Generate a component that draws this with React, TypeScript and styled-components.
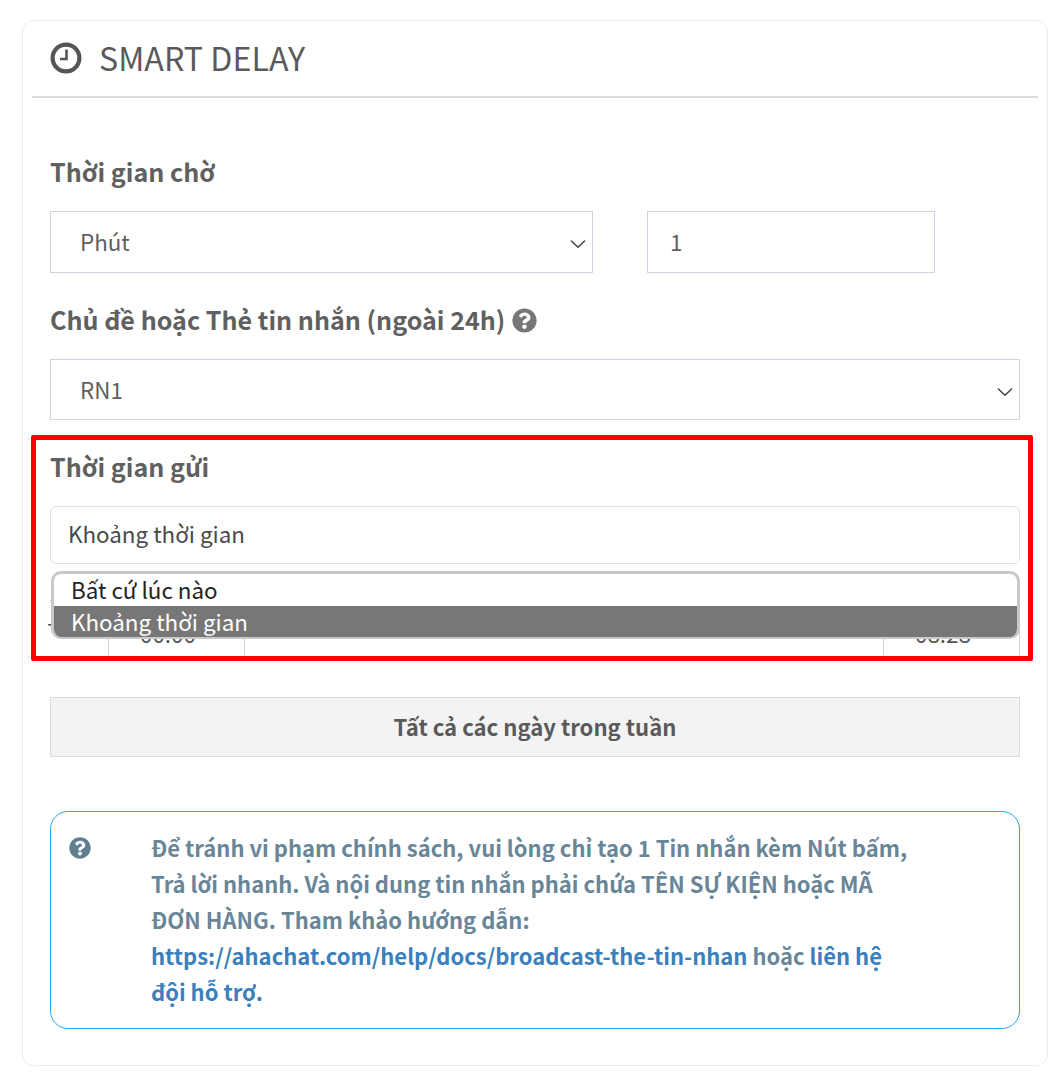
import React from 'react';
import styled, { createGlobalStyle } from 'styled-components';
import { FaQuestionCircle } from 'react-icons/fa';

const GlobalStyle = createGlobalStyle`
  * {
    box-sizing: border-box;
  }
  html, body {
    margin: 0;
    padding: 0;
    background: #fff;
    font-family: "Noto Sans CJK SC", "Open Sans", sans-serif;
  }
`;

const Chevron = () => (
  <ChevronIcon viewBox="0 0 16 16" fill="none">
    <path d="M1.4 5 8 11.2 14.6 5" stroke="#444" strokeWidth="1.5" strokeLinecap="round" strokeLinejoin="round" />
  </ChevronIcon>
);

const App: React.FC = () => {
  return (
    <Page>
      <GlobalStyle />
      <Card>
        <Header>
          <ClockIcon viewBox="0 0 32 32" fill="none">
            <circle cx="16" cy="16" r="13.4" stroke="#555" strokeWidth="4.2" />
            <path d="M16.5 7.5V17H10" stroke="#555" strokeWidth="2.6" />
          </ClockIcon>
          <Title>SMART DELAY</Title>
        </Header>
        <Body>
          <Label>Thời gian chờ</Label>
          <DelayRow>
            <SelectBox $width={543}>
              Phút
              <Chevron />
            </SelectBox>
            <SelectBox $width={288} $noArrow>
              1
            </SelectBox>
          </DelayRow>

          <Label>
            Chủ đề hoặc Thẻ tin nhắn (ngoài 24h)
            <HelpIcon />
          </Label>
          <SelectBox $height={61}>
            RN1
            <Chevron />
          </SelectBox>

          <Highlight>
            <Label>Thời gian gửi</Label>
            <RoundedSelect>Khoảng thời gian</RoundedSelect>
            <TimeRow>
              <TimeCell $width={59}>
                <Dash>-</Dash>
              </TimeCell>
              <TimeCell $width={136}>00:00</TimeCell>
              <TimeCell $grow />
              <TimeCell $width={135}>08:28</TimeCell>
            </TimeRow>
            <Dropdown>
              <Option>Bất cứ lúc nào</Option>
              <Option $selected>Khoảng thời gian</Option>
            </Dropdown>
            <RedFrame />
          </Highlight>

          <DaysButton>Tất cả các ngày trong tuần</DaysButton>

          <Alert>
            <AlertIcon>
              <FaQuestionCircle />
            </AlertIcon>
            <AlertText>
              Để tránh vi phạm chính sách, vui lòng chỉ tạo 1 Tin nhắn kèm Nút bấm,
              <br />
              Trả lời nhanh. Và nội dung tin nhắn phải chứa TÊN SỰ KIỆN hoặc MÃ
              <br />
              ĐƠN HÀNG. Tham khảo hướng dẫn:
              <br />
              <Link href="#">https://ahachat.com/help/docs/broadcast-the-tin-nhan</Link> hoặc{' '}
              <Link href="#">liên hệ</Link>
              <br />
              <Link href="#">đội hỗ trợ.</Link>
            </AlertText>
          </Alert>
        </Body>
      </Card>
    </Page>
  );
};

const Page = styled.div`
  width: 1064px;
  height: 1084px;
  padding: 20px 16px 0 22px;
  overflow: hidden;
`;
const Card = styled.div`
  width: 1026px;
  height: 1046px;
  padding: 0 9px;
  background: #fff;
  border: 1px solid #e9ecef;
  border-radius: 12px;
`;
const Header = styled.div`
  height: 77px;
  padding: 0 18px 4px;
  display: flex;
  align-items: center;
  gap: 17px;
  border-bottom: 2px solid #d7dce1;
`;
const ClockIcon = styled.svg`
  width: 32px;
  height: 32px;
  margin-top: 3px;
`;
const Title = styled.h2`
  margin: 0;
  font-size: 32.2px;
  font-weight: 400;
  color: #5a5a5a;
`;
const Body = styled.div`
  padding: 55px 18px 0;
`;
const Label = styled.div`
  height: 38px;
  padding-bottom: 2px;
  line-height: 36px;
  margin: 28px 0 20px;
  font-size: 25.1px;
  font-weight: 600;
  color: #606060;
  display: flex;
  align-items: center;
  gap: 7px;
  &:first-child {
    margin-top: 0;
  }
`;
const DelayRow = styled.div`
  display: flex;
  gap: 54px;
`;
const SelectBox = styled.div<{ $width?: number; $height?: number; $noArrow?: boolean }>`
  width: ${(p) => (p.$width ? `${p.$width}px` : '100%')};
  height: ${(p) => p.$height ?? 62}px;
  padding: 0 6px 2px 29px;
  display: flex;
  align-items: center;
  justify-content: space-between;
  background: #fff;
  border: 1px solid #d0d4e2;
  font-size: 22.4px;
  color: #5f5f5f;
  ${(p) => p.$noArrow && 'padding-left: 22px;'}
`;
const ChevronIcon = styled.svg`
  width: 16px;
  height: 16px;
  margin-top: 6px;
`;
const HelpIcon = styled(FaQuestionCircle)`
  width: 25px;
  height: 25px;
  margin-top: 2px;
  color: #777;
`;
const Highlight = styled.div`
  position: relative;
  padding-top: 28px;
`;
const RoundedSelect = styled.div`
  height: 58px;
  padding: 0 17px 4px;
  display: flex;
  align-items: center;
  border: 1px solid #dfe1e6;
  border-radius: 6px;
  font-size: 22.4px;
  color: #4a4a4a;
`;
const TimeRow = styled.div`
  height: 58px;
  margin-top: 36px;
  display: flex;
  border: 1px solid #d0d4e2;
  border-left: 0;
`;
const TimeCell = styled.div<{ $width?: number; $grow?: boolean }>`
  width: ${(p) => (p.$width ? `${p.$width}px` : 'auto')};
  ${(p) => p.$grow && 'flex: 1;'}
  padding: 8px 0 0 31px;
  display: flex;
  align-items: center;
  border-right: 1px solid #d0d4e2;
  font-size: 22.4px;
  color: #555;
  &:first-child {
    padding-left: 0;
  }
  &:last-child {
    border-right: 0;
  }
`;
const Dash = styled.span`
  margin: 0 0 24px -3px;
`;
const Dropdown = styled.div`
  position: absolute;
  left: 1px;
  right: 0;
  top: 151px;
  height: 68px;
  overflow: hidden;
  background: #fff;
  border: 3px solid #c8c8c8;
  border-bottom-width: 2px;
  border-radius: 10px;
`;
const Option = styled.div<{ $selected?: boolean }>`
  height: 32px;
  padding-left: 17px;
  line-height: 30px;
  font-size: 22.4px;
  color: ${(p) => (p.$selected ? '#fff' : '#222')};
  background: ${(p) => (p.$selected ? '#777' : 'transparent')};
`;
const RedFrame = styled.div`
  position: absolute;
  left: -19px;
  right: -13px;
  top: 15px;
  bottom: -3px;
  border: 5px solid #f00;
  border-radius: 2px;
  pointer-events: none;
`;
const DaysButton = styled.div`
  height: 60px;
  margin-top: 39px;
  padding-bottom: 2px;
  display: flex;
  align-items: center;
  justify-content: center;
  background: #f3f3f3;
  border: 1px solid #d8dbe2;
  font-size: 22.1px;
  font-weight: 600;
  color: #5a5a5a;
`;
const Alert = styled.div`
  height: 218px;
  margin-top: 54px;
  padding: 17px 18px 0;
  display: flex;
  border: 1px solid #23a6ee;
  border-radius: 18px;
`;
const AlertIcon = styled.div`
  width: 82px;
  flex: none;
  padding-top: 8px;
  font-size: 22px;
  line-height: 22px;
  color: #5f7f91;
`;
const AlertText = styled.div`
  font-size: 22px;
  line-height: 36px;
  font-weight: 600;
  color: #688698;
  white-space: nowrap;
`;
const Link = styled.a`
  color: #3a80bc;
  text-decoration: none;
`;

export default App;
